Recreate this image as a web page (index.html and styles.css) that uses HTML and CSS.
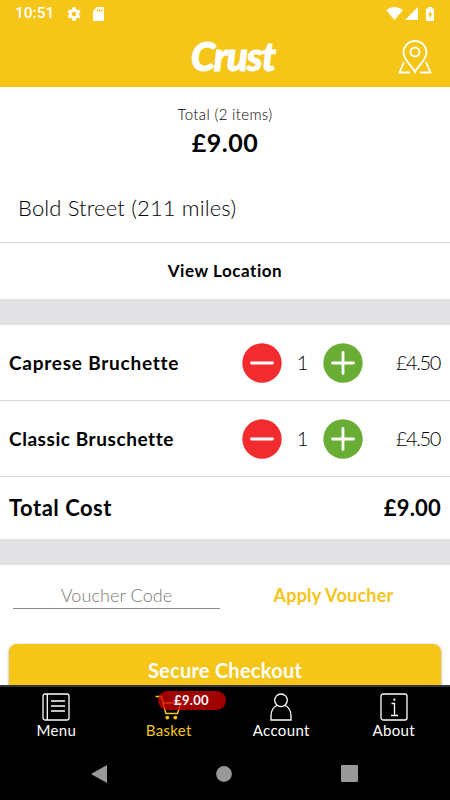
FILE: index.html
```html
<!DOCTYPE html>
<html lang="en">
<head>
<meta charset="utf-8">
<title>Crust basket</title>
<link rel="stylesheet" href="styles.css">
</head>
<body>
<div class="phone">
  <header class="header">
    <div class="status">
      <span class="clock">10:51</span>
      <svg class="gear" width="16" height="16" viewBox="0 0 24 24"><path fill="#fff" fill-rule="evenodd" d="M19.4 13a7.500 7.500 0 0 0 0-2l2.400-1.800-2.300-4-2.800 1.200a8 8 0 0 0-1.800-1L14.500 2h-5l-.4 3.400a8 8 0 0 0-1.800 1L4.500 5.200l-2.300 4L4.600 11a7.500 7.500 0 0 0 0 2l-2.400 1.800 2.300 4 2.800-1.200a8 8 0 0 0 1.800 1l.4 3.400h5l.4-3.400a8 8 0 0 0 1.800-1l2.800 1.200 2.300-4zM12 15.500a3.500 3.500 0 1 1 0-7 3.500 3.500 0 0 1 0 7z"/></svg>
      <svg class="sd" width="11" height="14" viewBox="0 0 11 14"><path fill="#fff" d="M4 0h6q1 0 1 1v12q0 1-1 1H1q-1 0-1-1V4z"/><path stroke="#f5c518" stroke-width="1.100" d="M4.500 2v3M6.700 2v3M8.900 2v3"/></svg>
      <span class="spacer"></span>
      <svg class="wifi" width="17" height="13" viewBox="0 0 17 13"><path fill="#fff" d="M0 3Q8.500-3 17 3L8.500 13z"/></svg>
      <svg class="signal" width="13" height="13" viewBox="0 0 13 13"><path fill="#fff" d="M13 0v13H0z"/></svg>
      <svg class="battery" width="8" height="14" viewBox="0 0 8 14"><path fill="#fff" d="M2 0h4v1.500h2V13q0 1-1 1H1q-1 0-1-1V1.500h2z"/><path fill="#f5c518" d="M4.800 3.500 1.800 8.200h1.900v3.300l2.700-4.700H4.800z"/></svg>
    </div>
    <div class="brand-row">
      <span class="brand">Crust</span>
      <svg class="map" width="34" height="34" viewBox="0 0 34 34" fill="none" stroke="#fff" stroke-width="1.800"><path d="M17 32C14 26 5.500 20 5.500 12.500a11.500 11.500 0 0 1 23 0C28.500 20 20 26 17 32z"/><circle cx="17" cy="12" r="4.500"/><path d="M6 22 1.500 32.500H12M28 22l4.500 10.500H22"/></svg>
    </div>
  </header>

  <main class="content">
    <section class="summary">
      <div class="summary-label">Total (2 items)</div>
      <div class="summary-total">£9.00</div>
      <div class="store">Bold Street (211 miles)</div>
    </section>
    <div class="location">View Location</div>
    <div class="gap"></div>
    <div class="item">
      <span class="name name-a">Caprese Bruchette</span>
      <svg width="40" height="40" viewBox="0 0 40 40"><circle cx="20" cy="20" r="19.700" fill="#f12b2e"/><path d="M9.500 20h21" stroke="#fff" stroke-width="2.800" stroke-linecap="round"/></svg>
      <span class="qty">1</span>
      <svg width="40" height="40" viewBox="0 0 40 40"><circle cx="20" cy="20" r="19.700" fill="#69ad35"/><path d="M9.500 20h21M20 9.500v21" stroke="#fff" stroke-width="2.800" stroke-linecap="round"/></svg>
      <span class="price">£4.50</span>
    </div>
    <div class="item">
      <span class="name name-b">Classic Bruschette</span>
      <svg width="40" height="40" viewBox="0 0 40 40"><circle cx="20" cy="20" r="19.700" fill="#f12b2e"/><path d="M9.500 20h21" stroke="#fff" stroke-width="2.800" stroke-linecap="round"/></svg>
      <span class="qty">1</span>
      <svg width="40" height="40" viewBox="0 0 40 40"><circle cx="20" cy="20" r="19.700" fill="#69ad35"/><path d="M9.500 20h21M20 9.500v21" stroke="#fff" stroke-width="2.800" stroke-linecap="round"/></svg>
      <span class="price">£4.50</span>
    </div>
    <div class="total"><span class="total-name">Total Cost</span><span class="total-price">£9.00</span></div>
    <div class="gap"></div>
    <div class="voucher">
      <div class="voucher-input">Voucher Code</div>
      <div class="voucher-apply">Apply Voucher</div>
    </div>
    <div class="checkout">Secure Checkout</div>
  </main>

  <nav class="tabs">
    <div class="tab">
      <svg width="28" height="28" viewBox="0 0 28 28" fill="none" stroke="#fff" stroke-width="1.300"><rect x="1" y="1" width="26" height="26" rx="2"/><path d="M5.300 1v26M9 8h14M9 13h14M9 18h14"/></svg>
      <span>Menu</span>
    </div>
    <div class="tab active">
      <svg width="28" height="28" viewBox="0 0 28 28" fill="none" stroke="#f5c518" stroke-width="1.500"><path d="M.5 3.500h6l4.300 17h11.700L26 10H8.200"/><g fill="#f5c518" stroke="none"><circle cx="12.300" cy="24.600" r="1.900"/><circle cx="20.300" cy="24.600" r="1.900"/></g></svg>
      <span>Basket</span>
      <div class="badge">£9.00</div>
    </div>
    <div class="tab">
      <svg width="28" height="28" viewBox="0 0 28 28" fill="none" stroke="#fff" stroke-width="1.300"><circle cx="14" cy="7.300" r="6.300"/><path d="M10 12.300Q4 15.500 4 23v4h20v-4q0-7.500-6-10.700"/></svg>
      <span>Account</span>
    </div>
    <div class="tab">
      <svg width="28" height="28" viewBox="0 0 28 28" fill="none" stroke="#fff" stroke-width="1.300"><rect x="1" y="1" width="26" height="26" rx="2"/><path d="M11.500 10.500H14.500v12M11 22.500h7"/><circle cx="14.300" cy="6.700" r="1.100" fill="#fff" stroke="none"/></svg>
      <span>About</span>
    </div>
  </nav>
  <div class="system">
    <svg width="16" height="18" viewBox="0 0 16 18"><path fill="#999" d="M16 0v18L0 9z"/></svg>
    <svg width="16" height="16" viewBox="0 0 16 16"><circle cx="8" cy="8" r="7.900" fill="#999"/></svg>
    <svg width="17" height="17" viewBox="0 0 17 17"><rect width="17" height="17" rx="1" fill="#999"/></svg>
  </div>
</div>
</body>
</html>
```

FILE: styles.css
```css
* { box-sizing: border-box; }
body { margin: 0; font-family: Lato, "Open Sans", sans-serif; font-variant-ligatures: none; color: #000; background: #fff; }
svg { display: block; flex: none; }
.phone { width: 450px; height: 800px; display: flex; flex-direction: column; overflow: hidden; white-space: nowrap; }

.header { height: 87px; background: #f5c518; color: #fff; flex: none; }
.status { height: 27px; display: flex; align-items: center; padding: 0 16px 0 15px; }
.clock { font: 500 15.500px/27px Roboto, sans-serif; width: 51px; }
.sd { margin-left: 11px; }
.spacer { flex: 1; }
.signal { margin-left: 2px; }
.battery { margin-left: 8px; }
.brand-row { height: 60px; display: grid; grid-template-columns: 1fr auto 1fr; align-items: center; padding: 0 18px; }
.brand { grid-column: 2; font-size: 39px; line-height: 40px; font-weight: 900; font-style: italic; letter-spacing: -1.100px; margin: -2px 0 0 16px; -webkit-text-stroke: 1px #fff; }
.map { justify-self: end; }

.content { height: 598px; overflow: hidden; flex: none; }
.summary { height: 155px; padding-top: 17px; text-align: center; }
.summary-label { font-size: 15px; line-height: 20px; font-weight: 300; letter-spacing: .34px; }
.summary-total { font-size: 25px; line-height: 37px; font-weight: 700; letter-spacing: .5px; }
.store { font-size: 22px; line-height: 30px; font-weight: 300; letter-spacing: .15px; text-align: left; padding: 32px 0 0 18px; }
.location { height: 57px; border-top: 1px solid #dcdcdc; font-size: 17px; line-height: 56px; font-weight: 700; letter-spacing: .55px; text-align: center; }
.gap { height: 26px; background: #e2e2e4; }
.item { height: 76px; padding: 0 9px; border-bottom: 1px solid #d8d8d8; display: flex; align-items: center; }
.name { width: 233px; font-size: 19px; font-weight: 700; }
.name-a { letter-spacing: .76px; }
.name-b { letter-spacing: .56px; }
.qty { width: 41px; text-align: center; font-size: 20px; font-weight: 300; position: relative; top: -1px; }
.price { flex: 1; text-align: right; font-size: 20px; font-weight: 300; letter-spacing: -1.400px; position: relative; top: -1px; left: -1px; }
.total { height: 62px; padding: 0 9px 2px; display: flex; align-items: center; justify-content: space-between; font-size: 22px; font-weight: 700; letter-spacing: .5px; }
.total-price { letter-spacing: .2px; }
.voucher { height: 79px; padding: 0 13px; display: flex; }
.voucher-input { width: 207px; height: 44px; border-bottom: 1px solid #8a8a8a; color: #777; font-size: 18px; line-height: 60px; font-weight: 300; letter-spacing: .1px; text-align: center; }
.voucher-apply { flex: 1; text-align: center; color: #f5c518; font-size: 18px; line-height: 61px; font-weight: 700; letter-spacing: .25px; padding-left: 10px; }
.checkout { height: 60px; margin: 0 9px; border-radius: 8px; background: #f5c518; color: #fff; font-size: 20px; line-height: 53px; font-weight: 700; letter-spacing: .25px; text-align: center; box-shadow: 0 1px 3px rgba(0, 0, 0, .4); }

.tabs { height: 62px; flex: none; background: #000; border-top: 2px solid #333538; display: grid; grid-template-columns: repeat(4, 1fr); color: #fff; }
.tab { position: relative; display: flex; flex-direction: column; align-items: center; padding-top: 6px; font-size: 15px; line-height: 18px; letter-spacing: .35px; }
.tab.active { color: #f5c518; }
.badge { position: absolute; left: 45px; top: 4px; width: 68px; height: 19px; border-radius: 10px; background: rgba(214, 0, 0, .74); color: #fff; font-size: 13px; line-height: 19px; font-weight: 700; text-align: center; }
.system { flex: 1; background: #000; display: flex; align-items: center; justify-content: space-between; padding: 0 92px 0 91px; }
```
